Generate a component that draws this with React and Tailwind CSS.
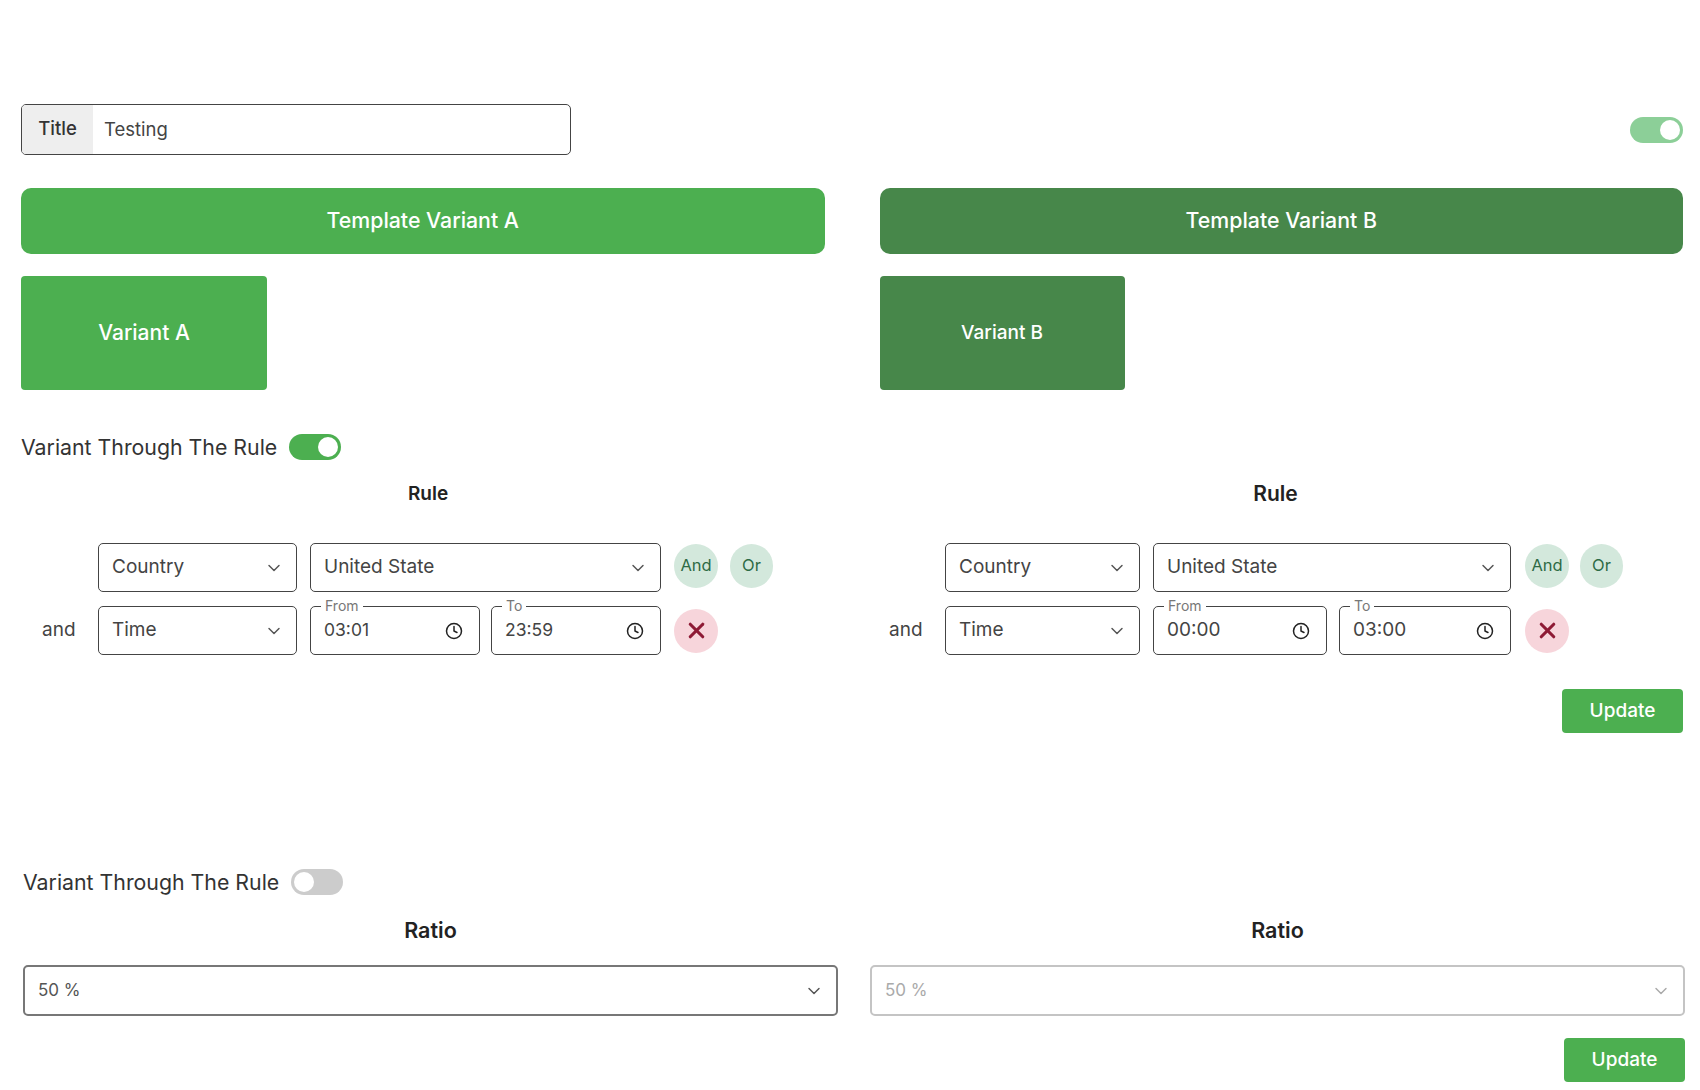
import React from 'react';
import { ChevronDown, Clock, X } from 'lucide-react';

const Toggle = ({ on, className = '' }) => (
  <div className={`flex h-[26px] w-[52px] items-center rounded-full px-[3px] ${on ? 'justify-end' : 'justify-start'} ${className}`}>
    <div className="h-5 w-5 rounded-full bg-white" />
  </div>
);

const Select = ({ label, width }) => (
  <div className={`flex h-[49px] items-center justify-between rounded-[5px] border border-[#444] bg-white pl-[13px] pr-[12px] text-[19px] text-[#444] ${width}`}>
    <span>{label}</span>
    <ChevronDown size={20} strokeWidth={1.75} className="text-[#555]" />
  </div>
);

const TimeField = ({ legend, value, width, textSize }) => (
  <div className={`relative flex h-[49px] items-center justify-between rounded-[5px] border border-[#444] bg-white pl-[13px] pr-[16px] text-[#444] ${textSize} ${width}`}>
    <span className="absolute left-[10px] top-[-8px] bg-white px-[4px] text-[14px] leading-[14px] text-[#777]">{legend}</span>
    <span>{value}</span>
    <Clock size={18} strokeWidth={2} className="text-[#222]" />
  </div>
);

const RoundButton = ({ children, className = '' }) => (
  <div className={`flex h-[44px] items-center justify-center rounded-full text-[16.5px] ${className}`}>{children}</div>
);

const RulePanel = ({ titleSize, from, to, widths, timeSize, className = '' }) => (
  <div className={className}>
    <h3 className={`text-center font-semibold leading-[26px] text-[#222] ${titleSize}`}>Rule</h3>
    <div className="mt-[36px] flex items-center">
      <div className="w-[56px] shrink-0" />
      <Select label="Country" width={widths.type} />
      <div className={widths.gap1} />
      <Select label="United State" width={widths.value} />
      <div className={widths.gap2} />
      <RoundButton className="-mt-[4px] w-[44px] bg-[#d3e8dc] text-[#2e6b45]">And</RoundButton>
      <div className={widths.gap3} />
      <RoundButton className="-mt-[4px] w-[43px] bg-[#d3e8dc] text-[#2e6b45]">Or</RoundButton>
    </div>
    <div className="mt-[14px] flex items-center">
      <div className="w-[56px] shrink-0 text-[19px] text-[#444]">and</div>
      <Select label="Time" width={widths.type} />
      <div className={widths.gap1} />
      <TimeField legend="From" value={from} width={widths.from} textSize={timeSize} />
      <div className={widths.gap4} />
      <TimeField legend="To" value={to} width={widths.to} textSize={timeSize} />
      <div className={widths.gap2} />
      <RoundButton className="w-[44px] bg-[#f7d5db] text-[#8e1a35]">
        <X size={25} strokeWidth={3} />
      </RoundButton>
    </div>
  </div>
);

const UpdateButton = () => (
  <div className="flex h-[44px] w-[121px] items-center justify-center rounded-[4px] bg-[#4caf50] text-[19px] font-medium text-white">
    Update
  </div>
);

const RatioPanel = ({ disabled }) => (
  <div className="w-[815px]">
    <h3 className="text-center text-[21.5px] font-semibold leading-[32px] text-[#222]">Ratio</h3>
    <div className={`mt-[19px] flex h-[51px] items-center justify-between rounded-[5px] border-2 bg-white pl-[13px] pr-[12px] text-[17px] ${disabled ? 'border-[#c4c4c4] text-[#aaa]' : 'border-[#777] text-[#555]'}`}>
      <span>50 %</span>
      <ChevronDown size={20} strokeWidth={1.75} className={disabled ? 'text-[#aaa]' : 'text-[#555]'} />
    </div>
  </div>
);

export default function App() {
  return (
    <div className="min-h-[1090px] bg-white pt-[104px] font-['Inter',sans-serif]">
      <div className="pl-[21px] pr-[17px]">
        <div className="flex items-center justify-between">
          <div className="flex h-[51px] w-[550px] overflow-hidden rounded-[5px] border border-[#444]">
            <div className="flex w-[71px] items-center justify-center bg-[#eeeeee] pb-[2px] text-[18.5px] font-medium text-[#333]">Title</div>
            <div className="flex flex-1 items-center pl-[11px] text-[18.5px] text-[#444]">Testing</div>
          </div>
          <Toggle on className="w-[53px] bg-[#8ccf98]" />
        </div>

        <div className="mt-[33px] grid grid-cols-2 gap-x-[55px]">
          <div>
            <div className="flex h-[66px] items-center justify-center rounded-[10px] bg-[#4caf50] text-[21.3px] font-medium text-white">Template Variant A</div>
            <div className="mt-[22px] flex h-[114px] w-[246px] items-center justify-center rounded-[4px] bg-[#4caf50] text-[21px] font-medium text-white">Variant A</div>
          </div>
          <div>
            <div className="flex h-[66px] items-center justify-center rounded-[10px] bg-[#47874a] text-[21.3px] font-medium text-white">Template Variant B</div>
            <div className="mt-[22px] flex h-[114px] w-[245px] items-center justify-center rounded-[4px] bg-[#47874a] text-[19px] font-medium text-white">Variant B</div>
          </div>
        </div>
      </div>

      <div className="mt-[44px] flex items-center pl-[21px]">
        <span className="text-[21.3px] leading-[26px] text-[#333]">Variant Through The Rule</span>
        <Toggle on className="ml-[12px] bg-[#4caf50]" />
      </div>

      <div className="mt-[21px] flex">
        <RulePanel
          titleSize="text-[19px]"
          timeSize="text-[17.5px]"
          from="03:01"
          to="23:59"
          className="w-[867px] pl-[42px] pr-[53px]"
          widths={{ type: 'w-[199px]', value: 'w-[351px]', from: 'w-[170px]', to: 'w-[170px]', gap1: 'w-[13px]', gap2: 'w-[13px]', gap3: 'w-[12px]', gap4: 'w-[11px]' }}
        />
        <RulePanel
          titleSize="text-[21px]"
          timeSize="text-[19px]"
          from="00:00"
          to="03:00"
          className="w-[816px] pl-[22px] pr-[21px]"
          widths={{ type: 'w-[195px]', value: 'w-[358px]', from: 'w-[174px]', to: 'w-[172px]', gap1: 'w-[13px]', gap2: 'w-[14px]', gap3: 'w-[11px]', gap4: 'w-[12px]' }}
        />
      </div>

      <div className="mt-[34px] flex justify-end pr-[17px]">
        <UpdateButton />
      </div>

      <div className="mt-[136px] flex items-center pl-[23px]">
        <span className="text-[21.3px] leading-[26px] text-[#333]">Variant Through The Rule</span>
        <Toggle className="ml-[12px] bg-[#cccccc]" />
      </div>

      <div className="mt-[19px] flex justify-between pl-[23px] pr-[15px]">
        <RatioPanel />
        <RatioPanel disabled />
      </div>

      <div className="mt-[22px] flex justify-end pr-[15px]">
        <UpdateButton />
      </div>
    </div>
  );
}
